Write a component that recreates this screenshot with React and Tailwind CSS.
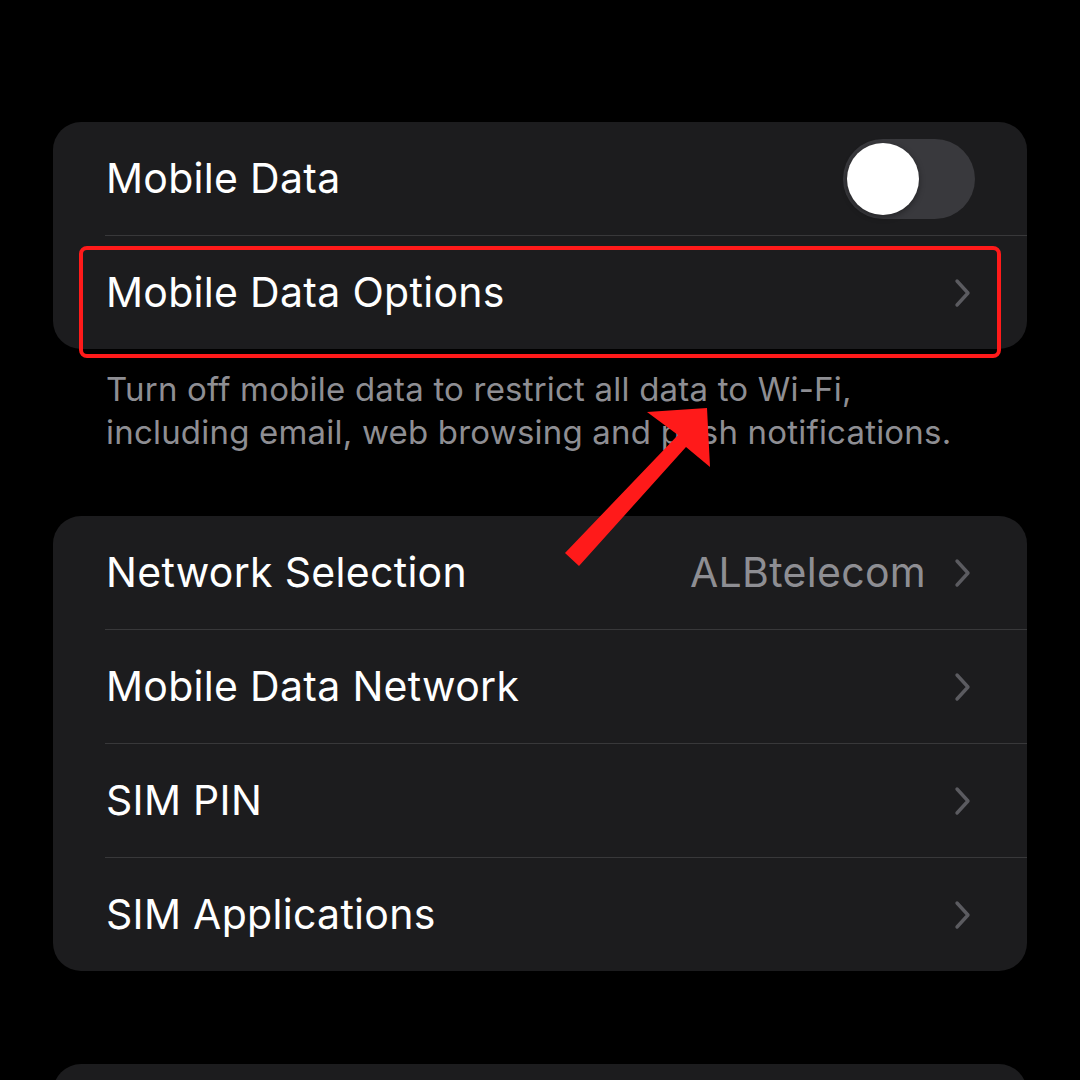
import React from 'react';

const Chevron = () => (
  <svg width="20" height="30" viewBox="0 0 20 30" className="shrink-0">
    <path d="M5 3 L16 15 L5 27" fill="none" stroke="#5b5b60" strokeWidth="3.4" strokeLinecap="round" strokeLinejoin="round" />
  </svg>
);

const Row = ({ label, value, last, children }) => (
  <div className="flex flex-col">
    <div className="flex h-[113px] items-center justify-between pl-[53px] pr-[55px]">
      <span className="text-[41px] text-white tracking-[0.3px]">{label}</span>
      <div className="flex items-center gap-[26px]">
        {value && <span className="text-[41px] text-[#8e8e93] tracking-[0.3px]">{value}</span>}
        {children || <Chevron />}
      </div>
    </div>
    {!last && <div className="ml-[52px] h-px bg-[#38383a]" />}
  </div>
);

const Toggle = () => (
  <div className="relative -mr-[3px] h-[80px] w-[132px] rounded-full bg-[#39393d]">
    <div className="absolute left-[4px] top-[4px] h-[72px] w-[72px] rounded-full bg-white shadow-[0_2px_6px_rgba(0,0,0,0.4)]" />
  </div>
);

export default function App() {
  return (
    <div className="relative h-[1080px] w-[1080px] overflow-hidden bg-black" style={{ fontFamily: 'Inter, "Noto Sans", sans-serif' }}>
      <div className="flex flex-col px-[53px] pt-[122px]">
        <div className="overflow-hidden rounded-[28px] bg-[#1c1c1e]">
          <Row label="Mobile Data">
            <Toggle />
          </Row>
          <Row label="Mobile Data Options" last />
        </div>

        <p className="mt-[19px] pl-[53px] text-[33px] leading-[43px] text-[#8e8e93] tracking-[0.2px]">
          Turn off mobile data to restrict all data to Wi-Fi,
          <br />
          including email, web browsing and push notifications.
        </p>

        <div className="mt-[62px] overflow-hidden rounded-[28px] bg-[#1c1c1e]">
          <Row label="Network Selection" value="ALBtelecom" />
          <Row label="Mobile Data Network" />
          <Row label="SIM PIN" />
          <Row label="SIM Applications" last />
        </div>

        <div className="mt-[93px] h-[120px] rounded-[28px] bg-[#1c1c1e]" />
      </div>

      {/* highlight box */}
      <div className="absolute left-[79px] top-[246px] h-[112px] w-[922px] rounded-[8px] border-[4px] border-[#ff1a1a]" />

      {/* arrow */}
      <svg className="absolute left-0 top-0" width="1080" height="1080" viewBox="0 0 1080 1080">
        <polygon
          points="565,553 678,435 647,412 707,408 710,467 686,447 579,566"
          fill="#ff1a1a"
        />
      </svg>
    </div>
  );
}
